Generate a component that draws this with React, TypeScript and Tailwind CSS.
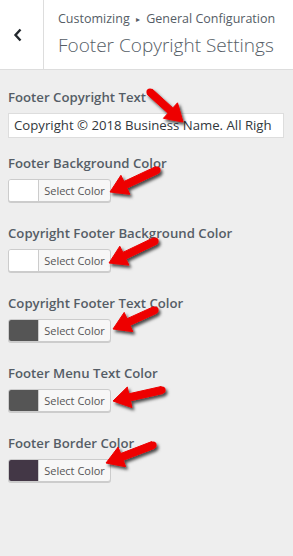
import React from "react";

type Pt = [number, number];

function arrowPoints(t: Pt, p: Pt, h = 17, hw = 10.5, sw = 3.6) {
  const dx = p[0] - t[0];
  const dy = p[1] - t[1];
  const L = Math.hypot(dx, dy);
  const d: Pt = [dx / L, dy / L];
  const n: Pt = [-d[1], d[0]];
  const b: Pt = [p[0] - d[0] * h, p[1] - d[1] * h];
  const pts: Pt[] = [
    [t[0] + n[0] * sw, t[1] + n[1] * sw],
    [b[0] + n[0] * sw, b[1] + n[1] * sw],
    [b[0] + n[0] * hw, b[1] + n[1] * hw],
    p,
    [b[0] - n[0] * hw, b[1] - n[1] * hw],
    [b[0] - n[0] * sw, b[1] - n[1] * sw],
    [t[0] - n[0] * sw, t[1] - n[1] * sw],
  ];
  return pts.map((q) => `${q[0].toFixed(1)},${q[1].toFixed(1)}`).join(" ");
}

const arrows: [Pt, Pt][] = [
  [[150, 92], [183, 122]],
  [[157, 170], [110, 192]],
  [[155, 241], [109, 263]],
  [[155, 310], [113, 329]],
  [[162, 390], [113, 401]],
  [[153, 445], [106, 463]],
];

function ColorControl({ label, color }: { label: string; color: string }) {
  return (
    <div className="flex flex-col">
      <div className="text-[13.2px] leading-[20px] font-semibold text-[#555d66] mb-[6px] whitespace-nowrap">
        {label}
      </div>
      <div className="flex h-[23px] w-[103px] rounded-[3px] border border-[#cccccc] bg-[#f7f7f7] shadow-[0_1px_0_#cccccc] overflow-hidden">
        <div className="w-[30px] h-full border-r border-[#cccccc]" style={{ backgroundColor: color }} />
        <div className="flex-1 flex items-center justify-center text-[11px] text-[#555555] leading-none">
          Select Color
        </div>
      </div>
    </div>
  );
}

export default function App() {
  return (
    <div
      className="relative w-[293px] h-[556px] overflow-hidden bg-[#eeeeee]"
      style={{ fontFamily: '"Open Sans", "Noto Sans", sans-serif' }}
    >
      <div className="flex h-[70px] bg-white border-b border-[#dddddd]">
        <div className="w-[44px] border-r border-[#dddddd] flex items-center pl-[13px]">
          <svg width="10" height="14" viewBox="0 0 10 14">
            <polyline points="7.5,1.5 2.5,7 7.5,12.5" fill="none" stroke="#23282d" strokeWidth="2.4" />
          </svg>
        </div>
        <div className="flex flex-col pl-[14px] pt-[10px]">
          <div className="text-[12.5px] leading-[18px] text-[#555d66] whitespace-nowrap">
            Customizing <span className="text-[8px] relative top-[-1px] mx-[3px]">▸</span> General Configuration
          </div>
          <div className="text-[19px] leading-[28px] font-light text-[#555d66] whitespace-nowrap mt-[2px]">
            Footer Copyright Settings
          </div>
        </div>
      </div>

      <div className="flex flex-col px-[8px] pt-[17px]">
        <div className="text-[13.2px] leading-[20px] font-semibold text-[#555d66] mb-[6px]">
          Footer Copyright Text
        </div>
        <div className="h-[25px] w-[276px] bg-white border border-[#dddddd] flex items-center pl-[5px] overflow-hidden whitespace-nowrap text-[13.2px] text-[#32373c]">
          Copyright © 2018 Business Name. All Righ
        </div>
        <div className="flex flex-col gap-[21px] mt-[15px]">
          <ColorControl label="Footer Background Color" color="#ffffff" />
          <ColorControl label="Copyright Footer Background Color" color="#ffffff" />
          <ColorControl label="Copyright Footer Text Color" color="#555555" />
          <ColorControl label="Footer Menu Text Color" color="#555555" />
          <ColorControl label="Footer Border Color" color="#433746" />
        </div>
      </div>

      <svg className="absolute left-0 top-0 pointer-events-none" width="293" height="556">
        <defs>
          <filter id="sh" x="-50%" y="-50%" width="200%" height="200%">
            <feDropShadow dx="2" dy="2.5" stdDeviation="1.6" floodColor="#000" floodOpacity="0.7" />
          </filter>
        </defs>
        {arrows.map(([t, p], i) => (
          <g key={i} filter="url(#sh)">
            <polygon points={arrowPoints(t, p)} fill="#ee0000" strokeLinejoin="round" stroke="#ee0000" strokeWidth="1" />
            <circle cx={t[0]} cy={t[1]} r={3.6} fill="#ee0000" />
          </g>
        ))}
      </svg>
    </div>
  );
}
